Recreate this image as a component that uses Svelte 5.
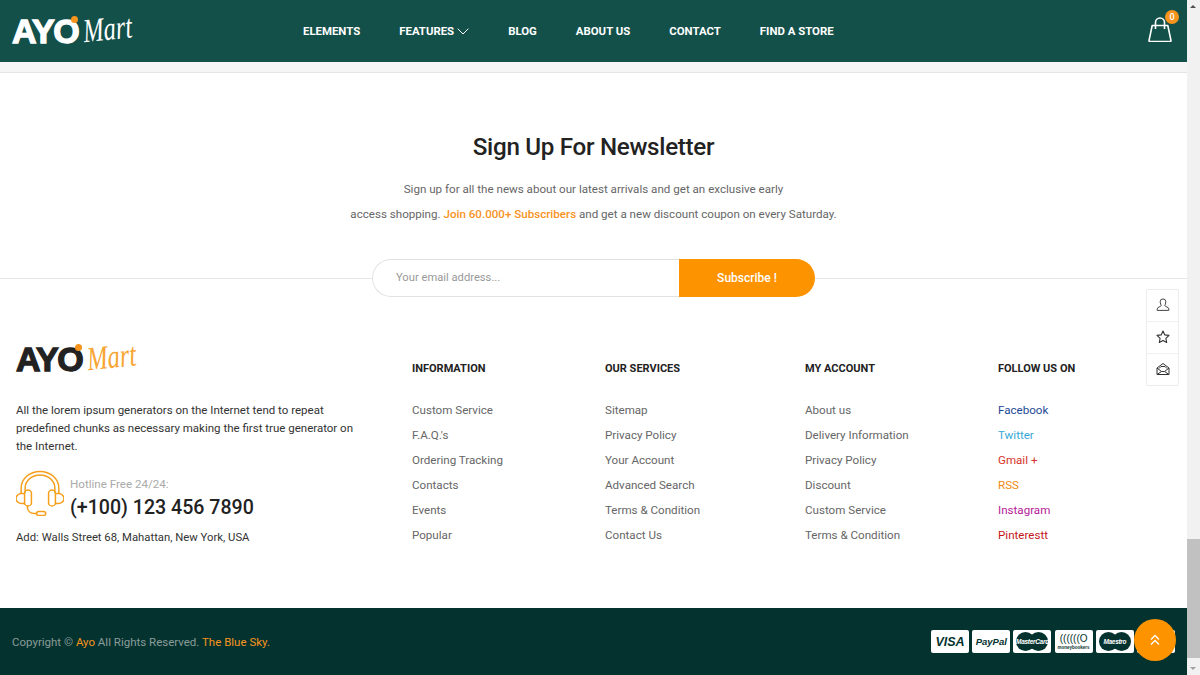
<script>
  const nav = ['ELEMENTS', 'FEATURES', 'BLOG', 'ABOUT US', 'CONTACT', 'FIND A STORE'];

  const columns = [
    { title: 'INFORMATION', links: ['Custom Service', "F.A.Q.'s", 'Ordering Tracking', 'Contacts', 'Events', 'Popular'] },
    { title: 'OUR SERVICES', links: ['Sitemap', 'Privacy Policy', 'Your Account', 'Advanced Search', 'Terms & Condition', 'Contact Us'] },
    { title: 'MY ACCOUNT', links: ['About us', 'Delivery Information', 'Privacy Policy', 'Discount', 'Custom Service', 'Terms & Condition'] }
  ];

  const social = [
    { name: 'Facebook', color: '#1d4a94' },
    { name: 'Twitter', color: '#35a9d6' },
    { name: 'Gmail +', color: '#d6322a' },
    { name: 'RSS', color: '#f08a12' },
    { name: 'Instagram', color: '#b5219a' },
    { name: 'Pinterestt', color: '#c4161c' }
  ];
</script>

<div class="window">
  <div class="page">
    <header class="topbar">
      <div class="logo light">
        <span class="ayo">AY<span class="o">O<i class="dot"></i></span></span><span class="mart">Mart</span>
      </div>
      <nav class="nav">
        {#each nav as item}
          <span class="nav-item">
            {item}
            {#if item === 'FEATURES'}
              <svg width="12" height="7" viewBox="0 0 12 7" fill="none" stroke="#fff" stroke-width="1"><path d="M.7.7 6 6l5.3-5.3" /></svg>
            {/if}
          </span>
        {/each}
      </nav>
      <div class="cart">
        <svg width="26" height="26" viewBox="0 0 26 26" fill="none" stroke="#fff" stroke-width="1.6" stroke-linejoin="round">
          <path d="M5.200 9.500h15.600L24 24.600a.8.8 0 0 1-.8.9H2.800a.8.8 0 0 1-.8-.9z" />
          <path d="M8.500 13V6.500a4.500 4.500 0 0 1 9 0V13" />
        </svg>
        <span class="badge">0</span>
      </div>
    </header>
    <div class="strip"></div>

    <section class="newsletter">
      <h2>Sign Up For Newsletter</h2>
      <p>Sign up for all the news about our latest arrivals and get an exclusive early</p>
      <p>access shopping. <strong>Join 60.000+ Subscribers</strong> and get a new discount coupon on every Saturday.</p>
      <div class="signup">
        <form class="form">
          <span class="email">Your email address...</span>
          <span class="subscribe">Subscribe !</span>
        </form>
      </div>
    </section>

    <section class="links">
      <div class="about">
        <div class="logo dark">
          <span class="ayo">AY<span class="o">O<i class="dot"></i></span></span><span class="mart">Mart</span>
        </div>
        <p class="blurb">All the lorem ipsum generators on the Internet tend to repeat predefined chunks as necessary making the first true generator on the Internet.</p>
        <div class="hotline">
          <svg width="48" height="47" viewBox="4 0 42 47" fill="none" stroke="#f59f1c" stroke-width="1.300" stroke-linecap="round" preserveAspectRatio="none">
            <path d="M8.500 23v-5a16.500 16.500 0 0 1 33 0v5" />
            <path d="M12 22v-4a13 13 0 0 1 26 0v4" />
            <rect x="11.500" y="20" width="6" height="16" rx="3" />
            <rect x="32.500" y="20" width="6" height="16" rx="3" />
            <path d="M11.500 23.500H9a5 5 0 0 0 0 10h2.500M38.500 23.500H41a5 5 0 0 1 0 10h-2.500" />
            <path d="M14 36v2a6 6 0 0 0 6 5.500h2" />
            <rect x="22" y="41.500" width="8" height="3.800" rx="1.900" />
          </svg>
          <div class="hot-text">
            <div class="hot-label">Hotline Free 24/24:</div>
            <div class="hot-number">(+100) 123 456 7890</div>
          </div>
        </div>
        <div class="address">Add: Walls Street 68, Mahattan, New York, USA</div>
      </div>

      {#each columns as col}
        <div class="col">
          <h3>{col.title}</h3>
          <ul>
            {#each col.links as link}
              <li>{link}</li>
            {/each}
          </ul>
        </div>
      {/each}

      <div class="col">
        <h3>FOLLOW US ON</h3>
        <ul>
          {#each social as s}
            <li style="color: {s.color}">{s.name}</li>
          {/each}
        </ul>
      </div>
    </section>

    <footer class="bottom">
      <div class="copy">Copyright © <span>Ayo</span> All Rights Reserved. <span>The Blue Sky.</span></div>
      <div class="pay">
        <span class="card visa">VISA</span>
        <span class="card paypal">PayPal</span>
        <span class="card disc"><i></i><i></i><b>MasterCard</b></span>
        <span class="card mb"><em>((((((O</em><b>moneybookers</b></span>
        <span class="card disc"><i></i><i></i><b>Maestro</b></span>
        <span class="card"></span>
      </div>
    </footer>

    <aside class="tools">
      <div class="tool">
        <svg width="14" height="14" viewBox="0 0 14 14" fill="none" stroke="#444" stroke-width="1"><path d="M4.200 3.700a2.800 2.800 0 0 1 5.600 0c0 2-.9 3-.9 4 0 1 3.900 1.300 3.900 3.200v1.500H1.200v-1.500c0-1.900 3.900-2.200 3.900-3.200 0-1-.9-2-.9-4z" /></svg>
      </div>
      <div class="tool">
        <svg width="14" height="14" viewBox="0 0 14 14" fill="none" stroke="#333" stroke-width="1.100" stroke-linejoin="round"><path d="m7 1 1.800 3.900 4.200.5-3.100 2.900.8 4.200L7 10.400l-3.700 2.100.8-4.200L1 5.400l4.200-.5z" /></svg>
      </div>
      <div class="tool">
        <svg width="14" height="14" viewBox="0 0 14 14" fill="none" stroke="#333" stroke-width="1" stroke-linejoin="round"><path d="M1 6 7 1.500 13 6v6.500H1zM1 6l4.500 3.500h3L13 6M3 6.500 5 4.500h4l2 2M1 12.500l4.500-3M13 12.500l-4.500-3" /></svg>
      </div>
    </aside>

    <button class="to-top" aria-label="Back to top">
      <svg width="12" height="12" viewBox="0 0 12 12" fill="none" stroke="#fff" stroke-width="1.300"><path d="M2 5.500 6 1.500l4 4M2 10.500l4-4 4 4" /></svg>
    </button>
  </div>

  <div class="scrollbar">
    <span class="arrow up"></span>
    <div class="track"><div class="thumb"></div></div>
    <span class="arrow down"></span>
  </div>
</div>

<style>
  :global(body) {
    margin: 0;
    font-family: Roboto, "Noto Sans", sans-serif;
    color: #555;
    background: #fff;
    overflow: hidden;
  }

  .window {
    display: flex;
    width: 1200px;
    height: 675px;
    overflow: hidden;
  }

  .page {
    position: relative;
    flex: 1;
    min-width: 0;
    display: flex;
    flex-direction: column;
  }

  .topbar {
    height: 62px;
    background: #14504a;
    display: flex;
    align-items: center;
    padding: 0 14px 0 12px;
    flex-shrink: 0;
  }

  .logo {
    display: flex;
    align-items: center;
    width: 291px;
  }

  .ayo {
    font-family: "Liberation Sans", Arial, sans-serif;
    font-weight: 700;
    font-size: 34px;
    letter-spacing: -1.500px;
    -webkit-text-stroke: 1.300px currentColor;
  }

  .o {
    position: relative;
  }

  .dot {
    position: absolute;
    top: 4px;
    right: 0;
    width: 7px;
    height: 7px;
    border-radius: 50%;
    background: #f7941d;
  }

  .mart {
    font-family: "Liberation Serif", serif;
    font-style: italic;
    font-size: 29px;
    margin-left: 5px;
    transform: rotate(-6deg) scale(.85, 1.15);
    transform-origin: left center;
  }

  .light {
    color: #fff;
  }

  .dark {
    color: #222;
    height: 38px;
    margin-top: -5px;
  }

  .dark .mart {
    color: #f7a533;
  }

  .nav {
    display: flex;
    gap: 39px;
    flex: 1;
  }

  .nav-item {
    color: #fff;
    font-size: 11.400px;
    font-weight: 700;
    display: flex;
    align-items: center;
    gap: 3px;
  }

  .cart {
    position: relative;
    width: 26px;
    height: 26px;
    margin-top: -4px;
  }

  .badge {
    position: absolute;
    top: -6px;
    right: -6px;
    width: 14px;
    height: 14px;
    border-radius: 50%;
    background: #f7941d;
    color: #fff;
    font-size: 9px;
    font-weight: 500;
    display: flex;
    align-items: center;
    justify-content: center;
  }

  .strip {
    height: 10px;
    background: #f5f5f5;
    border-bottom: 1px solid #e4e4e4;
    flex-shrink: 0;
  }

  .newsletter {
    text-align: center;
    flex-shrink: 0;
  }

  h2 {
    margin: 56px 0 14px;
    font-size: 24.200px;
    line-height: 36px;
    font-weight: 500;
    color: #222;
    letter-spacing: -.3px;
  }

  .newsletter p {
    margin: 0 0 5px;
    font-size: 11.600px;
    line-height: 20px;
    color: #666;
  }

  .newsletter strong {
    color: #f7931e;
    font-weight: 500;
  }

  .signup {
    margin-top: 35px;
    display: flex;
    justify-content: center;
    background: linear-gradient(#e6e6e6, #e6e6e6) center / 100% 1px no-repeat;
  }

  .form {
    width: 443px;
    height: 38px;
    display: flex;
  }

  .email {
    flex: 1;
    border: 1px solid #e2e2e2;
    border-right: 0;
    border-radius: 19px 0 0 19px;
    background: #fff;
    font-size: 11.200px;
    color: #999;
    line-height: 36px;
    text-align: left;
    padding-left: 23px;
  }

  .subscribe {
    width: 136px;
    background: #fe9300;
    border-radius: 0 19px 19px 0;
    color: #fff;
    font-size: 12px;
    font-weight: 500;
    line-height: 38px;
  }

  .links {
    display: grid;
    grid-template-columns: 396px 193px 200px 193px 1fr;
    padding: 48px 0 0 16px;
    flex: 1;
  }

  .blurb {
    margin: 23px 0 0;
    width: 345px;
    font-size: 11.500px;
    line-height: 18px;
    color: #333;
  }

  .hotline {
    display: flex;
    gap: 6px;
    margin-top: 15px;
    align-items: flex-start;
  }

  .hot-text {
    padding-top: 7px;
  }

  .hot-label {
    font-size: 11.600px;
    line-height: 14px;
    color: #aaa;
  }

  .hot-number {
    font-size: 19.600px;
    line-height: 23px;
    font-weight: 500;
    color: #222;
    margin-top: 5px;
  }

  .address {
    font-size: 11.300px;
    line-height: 14px;
    color: #333;
    margin-top: 12px;
  }

  h3 {
    margin: 17px 0 22px;
    font-size: 11px;
    line-height: 14px;
    font-weight: 700;
    color: #222;
  }

  ul {
    margin: 0;
    padding: 0;
    list-style: none;
  }

  li {
    font-size: 11.600px;
    line-height: 25px;
    color: #666;
  }

  .bottom {
    height: 67px;
    background: #04332f;
    display: flex;
    align-items: center;
    justify-content: space-between;
    padding: 0 12px;
    flex-shrink: 0;
  }

  .copy {
    font-size: 11.500px;
    color: #8a9c99;
  }

  .copy span {
    color: #f7931e;
  }

  .pay {
    display: flex;
    gap: 3.200px;
  }

  .card {
    position: relative;
    width: 38px;
    height: 23px;
    background: #fff;
    border-radius: 2px;
    display: flex;
    flex-direction: column;
    align-items: center;
    justify-content: center;
    overflow: hidden;
    color: #04332f;
    font-family: "Liberation Sans", Arial, sans-serif;
  }

  .visa {
    font-size: 12.500px;
    font-weight: 700;
    font-style: italic;
  }

  .paypal {
    font-size: 9.500px;
    font-weight: 700;
    font-style: italic;
  }

  .disc i {
    position: absolute;
    top: 2px;
    width: 19px;
    height: 19px;
    border-radius: 50%;
    background: #04332f;
  }

  .disc i:first-child {
    left: 3px;
  }

  .disc i:nth-child(2) {
    right: 3px;
  }

  .disc b {
    position: relative;
    color: #fff;
    font-size: 6.500px;
    font-style: italic;
    letter-spacing: -.3px;
  }

  .mb em {
    font-size: 10px;
    line-height: 12px;
    font-style: normal;
  }

  .mb b {
    font-size: 4.500px;
    line-height: 6px;
  }

  .tools {
    position: absolute;
    top: 289px;
    right: 8px;
    width: 31px;
    border: 1px solid #ececec;
    border-radius: 2px;
    background: #fff;
  }

  .tool {
    height: 31px;
    display: flex;
    align-items: center;
    justify-content: center;
    border-bottom: 1px solid #f0f0f0;
  }

  .tool svg {
    margin-top: -2px;
  }

  .tool:last-child {
    border-bottom: 0;
  }

  .to-top {
    position: absolute;
    left: 1134px;
    top: 619px;
    width: 42px;
    height: 42px;
    border: 0;
    padding: 0;
    border-radius: 50%;
    background: #fe9300;
    display: flex;
    align-items: center;
    justify-content: center;
  }

  .scrollbar {
    width: 13px;
    background: #f1f1f1;
    display: flex;
    flex-direction: column;
    flex-shrink: 0;
  }

  .track {
    flex: 1;
    display: flex;
    align-items: flex-end;
    padding-bottom: 4px;
  }

  .thumb {
    width: 100%;
    height: 119px;
    background: #c1c1c1;
  }

  .arrow {
    height: 13px;
    position: relative;
  }

  .arrow::after {
    content: '';
    position: absolute;
    left: 3px;
    top: 5px;
    border-left: 3.500px solid transparent;
    border-right: 3.500px solid transparent;
  }

  .up::after {
    border-bottom: 3.500px solid #505050;
  }

  .down::after {
    border-top: 3.500px solid #a0a0a0;
  }
</style>
